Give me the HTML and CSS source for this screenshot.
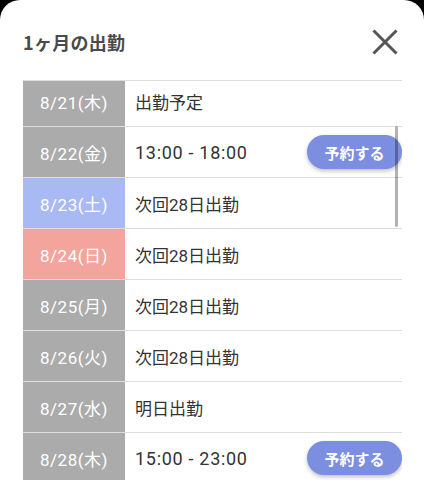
FILE: index.html
```html
<!DOCTYPE html>
<html lang="ja">
<head>
<meta charset="utf-8">
<title>1ヶ月の出勤</title>
<link rel="stylesheet" href="styles.css">
</head>
<body>
<div class="sheet">
  <header class="sheet-header">
    <h1 class="title">1ヶ月の出勤</h1>
    <button class="close" aria-label="閉じる">
      <svg width="26" height="26" viewBox="0 0 26 26"><path d="M1.5 1.5 L24.5 24.5 M24.5 1.5 L1.5 24.5" stroke="#555" stroke-width="3" fill="none"/></svg>
    </button>
  </header>
  <div class="list-wrap">
    <ul class="list">
      <li class="row"><span class="date">8/21(木)</span><span class="info">出勤予定</span></li>
      <li class="row"><span class="date">8/22(金)</span><span class="info"><span class="time">13:00 - 18:00</span><button class="reserve">予約する</button></span></li>
      <li class="row"><span class="date sat">8/23(土)</span><span class="info">次回28日出勤</span></li>
      <li class="row"><span class="date sun">8/24(日)</span><span class="info">次回28日出勤</span></li>
      <li class="row"><span class="date">8/25(月)</span><span class="info">次回28日出勤</span></li>
      <li class="row"><span class="date">8/26(火)</span><span class="info">次回28日出勤</span></li>
      <li class="row"><span class="date">8/27(水)</span><span class="info">明日出勤</span></li>
      <li class="row"><span class="date">8/28(木)</span><span class="info"><span class="time">15:00 - 23:00</span><button class="reserve">予約する</button></span></li>
    </ul>
    <div class="scrollbar"></div>
  </div>
</div>
</body>
</html>
```
FILE: styles.css
```css
html, body {
  margin: 0;
  padding: 0;
  background: #000;
  height: 480px;
  overflow: hidden;
}
body {
  font-family: Roboto, "Noto Sans CJK JP", sans-serif;
}
.sheet {
  background: #fff;
  border-radius: 20px 20px 0 0;
  padding: 0 22px 0 23px;
  height: 480px;
  box-sizing: border-box;
}
.sheet-header {
  height: 80px;
  padding-top: 3px;
  box-sizing: border-box;
  display: flex;
  align-items: center;
  justify-content: space-between;
}
.title {
  margin: 0;
  font-family: "Noto Sans CJK JP", sans-serif;
  font-size: 18px;
  font-weight: 700;
  letter-spacing: 0.3px;
  color: #4a4a4a;
}
.close {
  border: 0;
  background: none;
  padding: 0;
  margin-right: 4px;
  width: 26px;
  height: 26px;
  display: flex;
}
.list-wrap {
  position: relative;
  border-top: 1px solid #ddd;
  height: 399px;
  overflow: hidden;
}
.list {
  list-style: none;
  margin: -5px 0 0;
  padding: 0;
}
.row {
  display: grid;
  grid-template-columns: 102px 1fr;
  height: 51px;
  border-bottom: 1px solid #ddd;
  box-sizing: border-box;
}
.date {
  background: #ababab;
  color: #fff;
  font-size: 17px;
  letter-spacing: 0.5px;
  display: flex;
  align-items: center;
  justify-content: center;
}
.date.sat { background: #a9b9f4; }
.date.sun { background: #f3a49c; }
.info {
  display: flex;
  align-items: center;
  justify-content: space-between;
  padding-left: 10px;
  font-size: 17px;
  color: #333;
}
.time {
  font-size: 18px;
  letter-spacing: 0.7px;
}
.reserve {
  width: 95px;
  height: 34px;
  border: 0;
  border-radius: 17px;
  background: #7b8ee0;
  color: #fff;
  font-family: "Noto Sans CJK JP", sans-serif;
  font-size: 15px;
  font-weight: 700;
  box-shadow: 0 2px 4px rgba(0, 0, 0, 0.25);
  padding: 0;
}
.scrollbar {
  position: absolute;
  right: 4px;
  top: 45px;
  width: 3px;
  height: 101px;
  border-radius: 2px;
  background: rgba(0, 0, 0, 0.3);
}
```
